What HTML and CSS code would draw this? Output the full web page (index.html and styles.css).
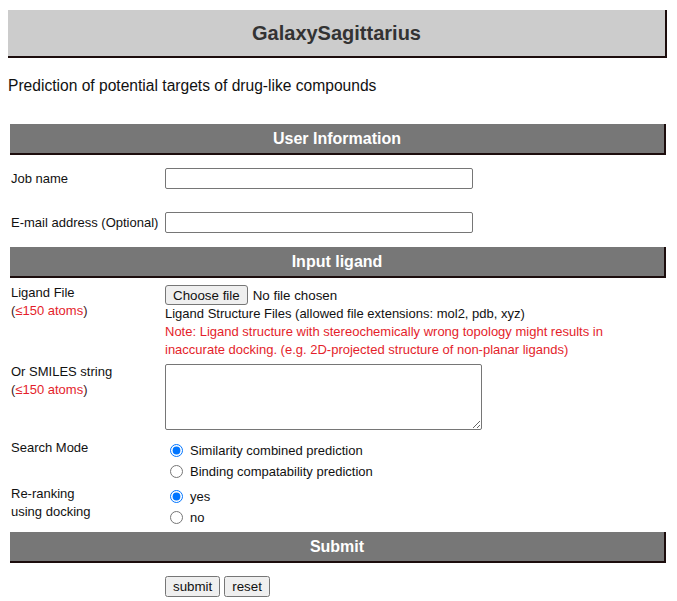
FILE: index.html
```html
<!DOCTYPE html>
<html>
<head>
<meta charset="utf-8">
<title>GalaxySagittarius</title>
<link rel="stylesheet" href="styles.css">
</head>
<body>
<div class="header">GalaxySagittarius</div>
<p class="desc">Prediction of potential targets of drug-like compounds</p>

<form class="form">
  <div class="bar bar-first">User Information</div>
  <div class="row row-user row-job">
    <div class="label">Job name</div>
    <div class="field"><input type="text" class="text"></div>
  </div>
  <div class="row row-user row-email">
    <div class="label">E-mail address (Optional)</div>
    <div class="field"><input type="text" class="text"></div>
  </div>

  <div class="bar bar-ligand">Input ligand</div>
  <div class="row row-top row-file">
    <div class="label">Ligand File<br><span class="paren">(</span><span class="red">≤150 atoms</span><span class="paren">)</span></div>
    <div class="field">
      <div class="fileline">
        <label class="filebtn">Choose file<input type="file" class="file"></label>
        <span class="filename">No file chosen</span>
      </div>
      <div class="line">Ligand Structure Files (allowed file extensions: mol2, pdb, xyz)</div>
      <div class="line red">Note: Ligand structure with stereochemically wrong topology might results in<br>inaccurate docking. (e.g. 2D-projected structure of non-planar ligands)</div>
    </div>
  </div>
  <div class="row row-top row-smiles">
    <div class="label">Or SMILES string<br><span class="paren">(</span><span class="red">≤150 atoms</span><span class="paren">)</span></div>
    <div class="field"><textarea class="area"></textarea></div>
  </div>
  <div class="row row-top row-mode">
    <div class="label">Search Mode</div>
    <div class="field radios">
      <label class="opt"><input type="radio" name="mode" checked>Similarity combined prediction</label>
      <label class="opt"><input type="radio" name="mode">Binding compatability prediction</label>
    </div>
  </div>
  <div class="row row-top row-rerank">
    <div class="label">Re-ranking<br>using docking</div>
    <div class="field radios">
      <label class="opt"><input type="radio" name="dock" checked>yes</label>
      <label class="opt"><input type="radio" name="dock">no</label>
    </div>
  </div>

  <div class="bar bar-submit">Submit</div>
  <div class="buttons">
    <button type="button" class="btn">submit</button>
    <button type="reset" class="btn">reset</button>
  </div>
</form>
</body>
</html>
```
FILE: styles.css
```css
html, body {
  margin: 0;
  padding: 0;
}
body {
  margin: 8px;
  font-family: "Liberation Sans", Arial, sans-serif;
  color: #111;
  background: #fff;
}
.header {
  margin-top: 2px;
  width: 659px;
  box-sizing: border-box;
  height: 48px;
  background: #cccccc;
  border-bottom: 2px solid #1c0d0d;
  border-right: 2px solid #1c0d0d;
  text-align: center;
  font-weight: bold;
  font-size: 20px;
  line-height: 46px;
  color: #333;
}
.desc {
  margin: 18px 0 0 0;
  font-size: 15.6px;
  line-height: 18px;
  color: #111;
  padding-top: 1px;
}
.form {
  margin: 29px 0 0 2px;
  width: 656px;
  font-size: 13px;
}
.bar {
  box-sizing: border-box;
  height: 31px;
  background: #777777;
  border-bottom: 2px solid #1c0d0d;
  border-right: 2px solid #1c0d0d;
  color: #fff;
  font-weight: bold;
  font-size: 16px;
  line-height: 29px;
  text-align: center;
}
.row {
  display: grid;
  grid-template-columns: 155px 1fr;
}
.label {
  padding-left: 1px;
  line-height: 18px;
  color: #111;
}
.row-user {
  align-items: center;
}
.row-job {
  margin-top: 13px;
}
.row-email {
  margin-top: 23px;
}
.bar-ligand {
  margin-top: 14px;
}
.text {
  box-sizing: border-box;
  width: 308px;
  height: 21px;
  margin: 0;
  border: 1px solid #767676;
  border-radius: 2px;
  font: 13px "Liberation Sans", Arial, sans-serif;
}
.row-file {
  margin-top: 6px;
}
.fileline {
  display: flex;
  align-items: center;
  height: 20px;
  margin-top: 1px;
  font-size: 13.33px;
}
.filebtn {
  box-sizing: border-box;
  display: inline-flex;
  align-items: center;
  height: 20px;
  padding: 0 7px;
  margin-right: 5px;
  background: #efefef;
  border: 1px solid #767676;
  border-radius: 3px;
  color: #111;
  cursor: default;
}
.file {
  display: none;
}
.filename {
  color: #111;
}
.line {
  line-height: 18px;
}
.red {
  color: #e41e2b;
}
.paren {
  color: #3a1a1a;
}
.row-smiles {
  margin-top: 4px;
}
.area {
  display: block;
  box-sizing: border-box;
  width: 317px;
  height: 66px;
  margin: 1px 0 0 0;
  border: 1px solid #767676;
  border-radius: 2px;
  resize: both;
}
.row-mode {
  margin-top: 9px;
}
.radios {
  display: flex;
  flex-direction: column;
  padding-top: 1px;
}
.opt {
  display: flex;
  align-items: center;
  height: 21px;
  line-height: 21px;
}
.opt input {
  margin: 0 7px 0 5px;
  width: 13px;
  height: 13px;
}
.row-rerank {
  margin-top: 3px;
}
.bar-submit {
  margin-top: 4px;
}
.buttons {
  display: flex;
  gap: 4px;
  margin: 13px 0 0 155px;
}
.btn {
  margin: 0;
  height: 21px;
  padding: 1px 6px;
  font: 13.33px "Liberation Sans", Arial, sans-serif;
  color: #111;
}
```
